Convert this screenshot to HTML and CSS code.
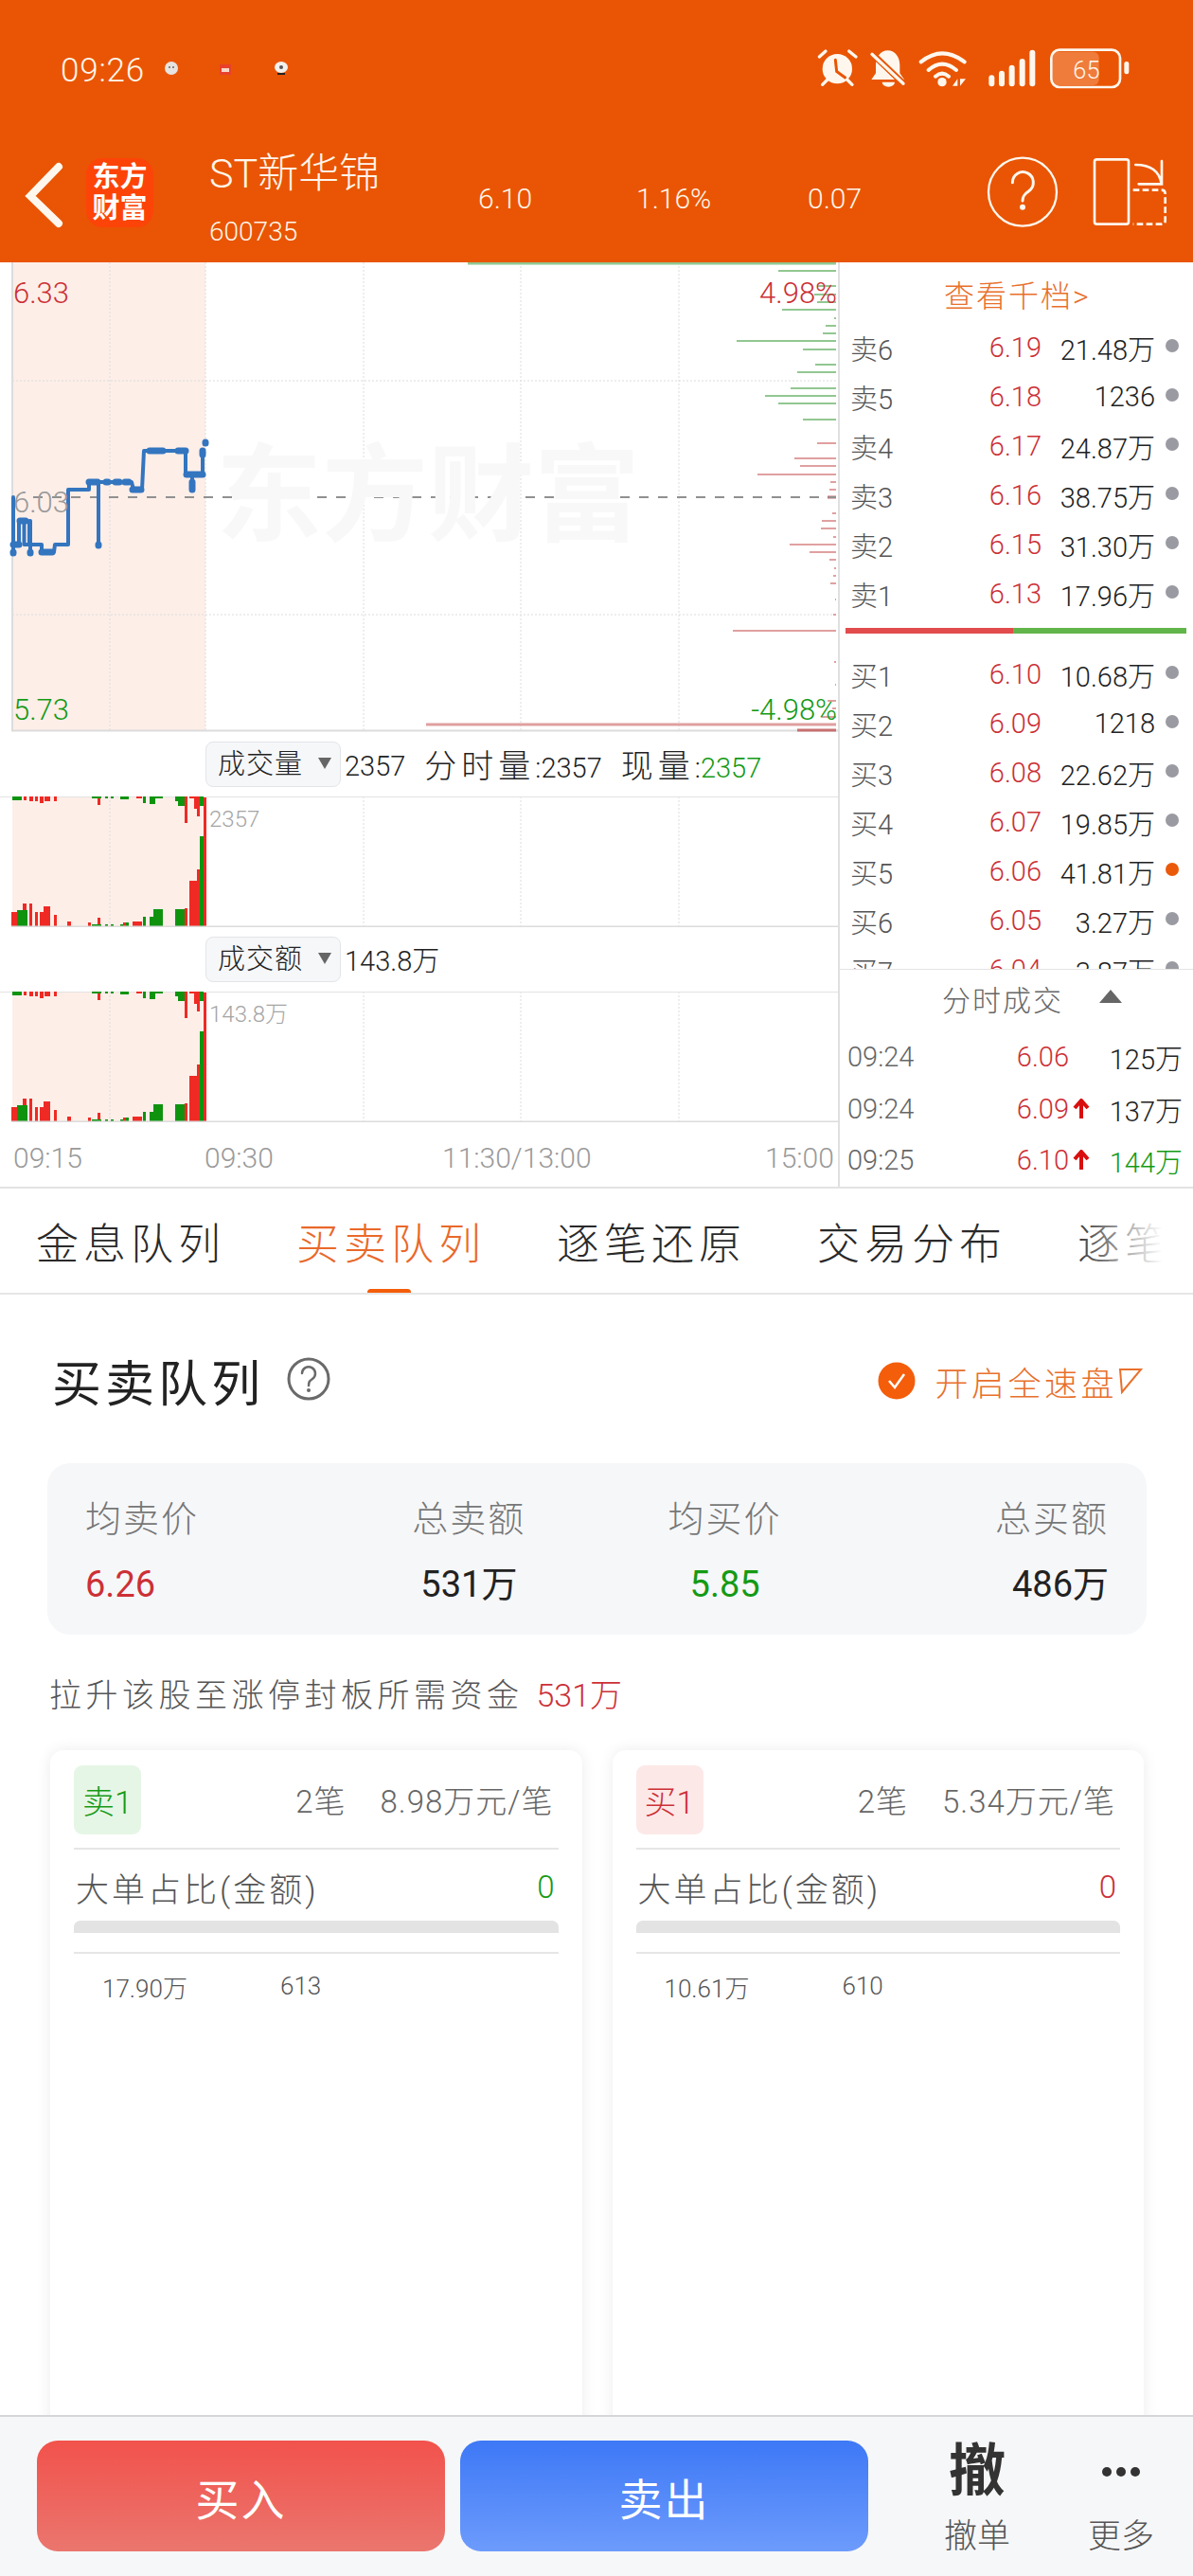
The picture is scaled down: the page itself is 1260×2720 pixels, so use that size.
FILE: index.html
```html
<!DOCTYPE html>
<html lang="zh-CN">
<head>
<meta charset="utf-8">
<title>ST新华锦</title>
<link rel="stylesheet" href="styles.css">
</head>
<body>
<div class="app">
  <header class="header">
    <div class="status">
      <span class="clock">09:26</span>
      <svg class="tiny" width="140" height="24" viewBox="0 0 140 24">
        <circle cx="12" cy="12" r="7" fill="#e6e3e0"/><circle cx="10" cy="11" r="1" fill="#666"/><circle cx="14" cy="11" r="1" fill="#666"/>
        <rect x="63" y="8" width="12" height="11" fill="#e8402a"/><rect x="65" y="12" width="8" height="4" fill="#f6d8c8"/>
        <ellipse cx="128" cy="11" rx="7" ry="6" fill="#f2efec"/><rect x="124" y="17" width="8" height="2" fill="#222"/><circle cx="128" cy="11" r="2" fill="#555"/>
      </svg>
      <svg class="status-icons" width="360" height="70" viewBox="0 0 1080 210">
        <circle cx="103" cy="98" r="47" fill="#fff7ee"/>
        <path d="M97 70L101 106L128 126" class="cut" stroke-width="9"/>
        <path d="M46 60L66 42M140 42L162 60M56 148L72 132M150 148L134 132" class="ink" stroke-width="10"/>
        <path d="M263 40c-24 0-38 22-38 46v26l-14 20h104l-14-20V86c0-24-14-46-38-46z" fill="#fff7ee"/>
        <path d="M245 140a20 15 0 0 0 40 0z" fill="#fff7ee"/>
        <path d="M205 42L320 152" class="cut" stroke-width="20"/>
        <path d="M213 52L312 145" class="ink" stroke-width="10"/>
        <path d="M368 76Q435 22 506 76M392 102Q435 64 480 102M414 122Q435 104 456 122" class="ink" stroke-width="12"/>
        <circle cx="435" cy="140" r="14" fill="#fff7ee"/>
        <path d="M468 152L484 130V152zM492 130L510 130L492 152z" fill="#fff7ee"/>
        <rect x="583" y="118" width="18" height="36" rx="9" fill="#fff7ee"/>
        <rect x="615" y="104" width="18" height="50" rx="9" fill="#fff7ee"/>
        <rect x="647" y="86" width="18" height="68" rx="9" fill="#fff7ee"/>
        <rect x="680" y="66" width="18" height="88" rx="9" fill="#fff7ee"/>
        <rect x="712" y="38" width="18" height="116" rx="9" fill="#fff7ee"/>
        <rect x="785" y="44" width="147" height="106" rx="18" fill="#ef7c3a"/>
        <rect x="781" y="38" width="218" height="118" rx="26" fill="none" stroke="#fff7ee" stroke-width="8"/>
        <rect x="1012" y="75" width="15" height="40" rx="7" fill="#fff7ee"/>
        <text x="850" y="130" class="batt">65</text>
      </svg>
    </div>
    <div class="nav">
      <svg class="back" width="50" height="74" viewBox="0 0 50 74"><path d="M37 6L7 37L37 66" class="ink" stroke-width="8"/></svg>
      <div class="logo"><span>东方</span><span>财富</span></div>
      <div class="stock">
        <div class="stock-name">ST新华锦</div>
        <div class="stock-code">600735</div>
      </div>
      <div class="quote"><span>6.10</span><span>1.16%</span><span>0.07</span></div>
      <svg class="nav-icons" width="220" height="110" viewBox="0 0 660 330">
        <circle cx="150" cy="158" r="108" fill="none" stroke="#fff7ee" stroke-width="7"/>
        <path d="M118 128a33 33 0 1 1 52 27c-15 10-20 17-20 31" class="ink" stroke-width="9"/>
        <circle cx="150" cy="206" r="9" fill="#fff7ee"/>
        <rect x="378" y="55" width="108" height="205" rx="7" fill="none" stroke="#fff7ee" stroke-width="8"/>
        <path d="M508 72q72 0 82 60M591 60V133H518" class="ink" stroke-width="8"/>
        <path d="M500 152H590q12 0 12 12V248q0 12-12 12H500" class="ink dash" stroke-width="8"/>
      </svg>
    </div>
  </header>

  <section class="market">
    <div class="charts">
      <div class="price-chart">
        <svg class="chart-svg" width="885" height="496" viewBox="0 0 885 496">
          <rect x="13" y="0" width="204" height="494" fill="#fdeee8"/>
          <path d="M116 0V494M217 0V494M384 0V494M550 0V494M717 0V494M13 125H884M13 372H884" class="grid"/>
          <path d="M13 0V495M12 494.5H885" class="axis"/>
          <path d="M822 9H883M863 25H883M860 34H883M863 42H883M826 50H883M881 59H883M872 67H883M869 75H883M778 83H883M848 92H883M861 108H883M842 116H883M835 133H883M808 141H883M822 149H883M848 166H883" class="depth-g"/>
          <path d="M494 1H883" class="depth-g thick"/>
          <path d="M863 191H883M839 207H883M845 215H883M800 224H883M877 232H883M876 240H883M879 265H883M868 273H883M867 281H883M880 290H883M834 298H883M855 306H883M876 314H883M881 323H883M880 331H883M877 339H883M882 356H883M880 372H883M774 389H883M881 422H883M882 446H883M874 463H883M879 471H883M868 480H883" class="depth-r"/>
          <path d="M450 488H883" class="depth-r thick"/>
          <path d="M874 248H883M842 494H883" class="depth-d"/>
          <path d="M35 248H883" class="mid"/>
          <path d="M14 248V306M14 298H20V273H25.5V298H31V273H32V306V298H44V306H57L58 298H72V240H94V232H104V298V232H139L141 240H150L152 199H196V224H203V232V224H214V199" class="line"/>
          <path d="M14 298h6M21 273h6M44 306h11M94 232h9M112 232h2M122 232h4M132 232h4M140 240h9M158 199h14M188 199h8M197 224h17M203 232v8M104 298v1M14 306v1M32 306v1M214 199v4M217 190v1" class="line fat"/>
        </svg>
        <span class="wm">东方财富</span>
        <span class="lab lab-tl red">6.33</span>
        <span class="lab lab-tr red">4.98%</span>
        <span class="lab lab-ml gray">6.03</span>
        <span class="lab lab-bl green">5.73</span>
        <span class="lab lab-br green">-4.98%</span>
      </div>

      <div class="sub">
        <div class="sub-head">
          <span class="pick">成交量<i class="caret"></i></span>
          <span class="sub-vals">2357</span>
          <span class="sub-vals gap"><span class="cjk">分时量</span>:2357</span>
          <span class="sub-vals gap"><span class="cjk">现量</span>:<em class="green">2357</em></span>
        </div>
        <div class="sub-plot">
          <svg class="chart-svg" width="885" height="138" viewBox="0 0 885 138">
            <g id="volume">
              <rect x="13" y="0" width="205" height="138" fill="#fdeee8"/>
              <path d="M116 0V138M384 0V138M550 0V138M717 0V138" class="grid"/>
              <path d="M0 0H885" class="hair"/>
              <path d="M12 138v-16h6v16zM24 138v-25h4v25zM31 138v-25h3v25zM37 138v-16h3v16zM42 138v-16h4v16zM46 138v-22h7v22zM57 138v-13h3v13zM71 138v-6h4v6zM93 138v-5h3v5zM103 138v-10h3v10zM130 138v-5h3v5zM140 138v-6h10v6zM195 138v-20h3v20zM200 138v-49h8v49zM208 138v-61h3v61zM215 138v-137h3v137zM25 0h3v4h-3zM31 0h4v5h-4zM37 0h3v5h-3zM42 0h4v7h-4zM47 0h6v5h-6zM57 0h3v5h-3zM103 0h3v9h-3zM144 0h6v2h-6zM195 0h3v28h-3zM200 0h5v2h-5zM205 0h3v13h-3zM208 0h3v21h-3z" fill="#ef2a24"/>
              <path d="M18 138v-18h6v18zM24 138v-18h5v18zM97 138v-3h10v3zM111 138v-3h3v3zM117 138v-3h3v3zM127 138v-3h3v3zM133 138v-5h3v5zM151 138v-11h3v11zM158 138v-11h4v11zM162 138v-19h10v19zM185 138v-19h3v19zM188 138v-19h7v19zM211 138v-96h4v96zM13 0h10v4h-10zM97 0h10v2h-10zM111 0h3v2h-3zM117 0h3v2h-3zM127 0h9v3h-9zM151 0h3v7h-3zM158 0h6v8h-6zM164 0h8v2h-8zM185 0h3v5h-3zM188 0h7v10h-7zM211 0h4v10h-4z" fill="#0f930f"/>
              <path d="M12 137.5H885" class="axis"/>
            </g>
          </svg>
          <span class="sub-tag">2357</span>
        </div>
      </div>

      <div class="sub">
        <div class="sub-head">
          <span class="pick">成交额<i class="caret"></i></span>
          <span class="sub-vals">143.8万</span>
        </div>
        <div class="sub-plot">
          <svg class="chart-svg" width="885" height="138" viewBox="0 0 885 138"><use href="#volume"/></svg>
          <span class="sub-tag">143.8万</span>
        </div>
      </div>

      <div class="axis-times"><span>09:15</span><span class="t2">09:30</span><span class="t3">11:30/13:00</span><span class="t4">15:00</span></div>
    </div>

    <aside class="side">
      <div class="book">
        <div class="book-link">查看千档&gt;</div>
        <div class="row"><span class="r-name">卖6</span><span class="r-price">6.19</span><span class="r-vol">21.48万</span><i class="dot"></i></div>
        <div class="row"><span class="r-name">卖5</span><span class="r-price">6.18</span><span class="r-vol">1236</span><i class="dot"></i></div>
        <div class="row"><span class="r-name">卖4</span><span class="r-price">6.17</span><span class="r-vol">24.87万</span><i class="dot"></i></div>
        <div class="row"><span class="r-name">卖3</span><span class="r-price">6.16</span><span class="r-vol">38.75万</span><i class="dot"></i></div>
        <div class="row"><span class="r-name">卖2</span><span class="r-price">6.15</span><span class="r-vol">31.30万</span><i class="dot"></i></div>
        <div class="row"><span class="r-name">卖1</span><span class="r-price">6.13</span><span class="r-vol">17.96万</span><i class="dot"></i></div>
        <div class="ratio"><i class="ratio-r"></i><i class="ratio-g"></i></div>
        <div class="row"><span class="r-name">买1</span><span class="r-price">6.10</span><span class="r-vol">10.68万</span><i class="dot"></i></div>
        <div class="row"><span class="r-name">买2</span><span class="r-price">6.09</span><span class="r-vol">1218</span><i class="dot"></i></div>
        <div class="row"><span class="r-name">买3</span><span class="r-price">6.08</span><span class="r-vol">22.62万</span><i class="dot"></i></div>
        <div class="row"><span class="r-name">买4</span><span class="r-price">6.07</span><span class="r-vol">19.85万</span><i class="dot"></i></div>
        <div class="row"><span class="r-name">买5</span><span class="r-price">6.06</span><span class="r-vol">41.81万</span><i class="dot on"></i></div>
        <div class="row"><span class="r-name">买6</span><span class="r-price">6.05</span><span class="r-vol">3.27万</span><i class="dot"></i></div>
        <div class="row"><span class="r-name">买7</span><span class="r-price">6.04</span><span class="r-vol">3.87万</span><i class="dot"></i></div>
      </div>
      <div class="trades">
        <div class="trades-head">分时成交<i class="tri"></i></div>
        <div class="trade"><span class="t-time">09:24</span><span class="t-price">6.06</span><span class="t-arrow"></span><span class="t-vol">125万</span></div>
        <div class="trade"><span class="t-time">09:24</span><span class="t-price">6.09</span><span class="t-arrow"><svg width="18" height="22" viewBox="0 0 18 22"><path d="M9 21V3M2 10L9 2L16 10" class="up"/></svg></span><span class="t-vol">137万</span></div>
        <div class="trade"><span class="t-time">09:25</span><span class="t-price">6.10</span><span class="t-arrow"><svg width="18" height="22" viewBox="0 0 18 22"><path d="M9 21V3M2 10L9 2L16 10" class="up"/></svg></span><span class="t-vol green">144万</span></div>
      </div>
    </aside>
  </section>

  <nav class="tabs">
    <span class="tab">金息队列</span>
    <span class="tab active">买卖队列</span>
    <span class="tab">逐笔还原</span>
    <span class="tab">交易分布</span>
    <span class="tab">逐笔委托</span>
    <i class="tabs-fade"></i>
  </nav>

  <main class="main">
    <div class="sec-head">
      <h1 class="sec-title">买卖队列</h1>
      <svg class="help" width="46" height="46" viewBox="0 0 46 46">
        <circle cx="23" cy="23" r="21" fill="none" stroke="#6a6a6a" stroke-width="3"/>
        <path d="M16 17a7 7 0 1 1 11 6c-3 2-4 3-4 7" fill="none" stroke="#6a6a6a" stroke-width="2.5" stroke-linecap="round"/>
        <circle cx="23" cy="35" r="2" fill="#6a6a6a"/>
      </svg>
      <div class="speed">
        <svg width="40" height="40" viewBox="0 0 40 40"><circle cx="20" cy="20" r="19.5" fill="#f45d0a"/><path d="M12 20L18 27L28 13" fill="none" stroke="#fff" stroke-width="2.5"/></svg>
        <span>开启全速盘</span>
        <svg width="28" height="36" viewBox="0 0 28 36"><path d="M3 6H25L5 30z" fill="none" stroke="#e8702c" stroke-width="2"/></svg>
      </div>
    </div>

    <div class="stats">
      <div class="stat s-left"><span class="stat-k">均卖价</span><span class="stat-v red">6.26</span></div>
      <div class="stat s-mid"><span class="stat-k">总卖额</span><span class="stat-v">531万</span></div>
      <div class="stat s-mid"><span class="stat-k">均买价</span><span class="stat-v green">5.85</span></div>
      <div class="stat s-right"><span class="stat-k">总买额</span><span class="stat-v">486万</span></div>
    </div>

    <p class="note">拉升该股至涨停封板所需资金<span class="red note-v">531万</span></p>

    <div class="queues">
      <article class="queue">
        <div class="q-top"><span class="badge badge-g">卖1</span><span class="q-info"><span>2笔</span><span>8.98万元/笔</span></span></div>
        <div class="q-big"><span class="q-big-k">大单占比(金额)</span><span class="green">0</span></div>
        <div class="q-bar"></div>
        <div class="q-row"><span class="q-amt">17.90万</span><span>613</span></div>
      </article>
      <article class="queue">
        <div class="q-top"><span class="badge badge-r">买1</span><span class="q-info"><span>2笔</span><span>5.34万元/笔</span></span></div>
        <div class="q-big"><span class="q-big-k">大单占比(金额)</span><span class="red">0</span></div>
        <div class="q-bar"></div>
        <div class="q-row"><span class="q-amt">10.61万</span><span>610</span></div>
      </article>
    </div>
  </main>

  <footer class="footer">
    <button class="btn btn-buy">买入</button>
    <button class="btn btn-sell">卖出</button>
    <div class="foot-item foot-a"><span class="foot-ico">撤</span><span class="foot-lab">撤单</span></div>
    <div class="foot-item foot-b"><span class="foot-ico dots"><i></i><i></i><i></i></span><span class="foot-lab">更多</span></div>
  </footer>
</div>
</body>
</html>
```

FILE: styles.css
```css
* { box-sizing: border-box; }
html, body { margin: 0; padding: 0; background: #fff; }
body { font-family: Roboto, "Noto Sans CJK SC", sans-serif; font-weight: 300; color: #222; }
i, em { font-style: normal; }
.app { width: 1260px; height: 2720px; display: flex; flex-direction: column; overflow: hidden; }
.red { color: #cc3036; }
.green { color: #159a15; }
.gray { color: #9a9a9a; }

.header { height: 277px; background: #e95504; color: #fff5ea; flex: none; }
.status { height: 110px; display: flex; align-items: flex-start; }
.clock { margin: 55px 0 0 64px; font-size: 35px; line-height: 40px; letter-spacing: 0.8px; }
.tiny { margin: 60px 0 0 16px; }
.status-icons { margin: 40px 50px 0 auto; }
.ink { fill: none; stroke: #fff7ee; stroke-linecap: round; }
.cut { fill: none; stroke: #e95504; stroke-linecap: round; }
.dash { stroke-linecap: butt; stroke-dasharray: 20 10; }
.batt { font-family: Roboto, sans-serif; font-weight: 300; font-size: 76px; fill: #fff7ee; }
.nav { height: 167px; display: flex; align-items: flex-start; position: relative; }
.back { margin: 60px 0 0 25px; }
.logo { width: 71px; height: 73px; margin: 57px 0 0 16px; background: #fc4408; border-radius: 17px; color: #fff; font-weight: 700; font-size: 29px; line-height: 33px; display: flex; flex-direction: column; align-items: center; justify-content: center; }
.stock { margin: 44px 0 0 59px; width: 284px; }
.stock-name { font-size: 43px; line-height: 58px; }
.stock-code { font-size: 28px; line-height: 34px; margin-top: 16px; }
.quote { margin-top: 80px; display: grid; grid-template-columns: 167px 181px 80px; font-size: 30px; line-height: 40px; }
.nav-icons { margin: 40px 10px 0 auto; }

.market { height: 976px; display: flex; flex: none; }
.charts { width: 885px; flex: none; display: flex; flex-direction: column; }
.price-chart { height: 496px; position: relative; }
.chart-svg { display: block; }
.grid { fill: none; stroke: #dcdcdc; stroke-width: 1; stroke-dasharray: 2 2; }
.axis { fill: none; stroke: #dcdcdc; stroke-width: 2; }
.hair { stroke: #e3e3e3; stroke-width: 2; fill: none; }
.depth-g { fill: none; stroke: #92c792; stroke-width: 2; }
.depth-r { fill: none; stroke: #e0a0a0; stroke-width: 2; }
.depth-d { fill: none; stroke: #c87070; stroke-width: 3; }
.thick { stroke-width: 3; }
.mid { fill: none; stroke: #909090; stroke-width: 2; stroke-dasharray: 10 10; }
.line { fill: none; stroke: #3375bf; stroke-width: 4; stroke-linecap: round; stroke-linejoin: round; }
.fat { stroke-width: 7; }
.wm { position: absolute; left: 228px; top: 183px; font-size: 112px; line-height: 130px; font-weight: 700; color: #f8f8f8; white-space: nowrap; }
.lab { position: absolute; font-size: 31px; line-height: 36px; }
.lab-tl { left: 14px; top: 15px; }
.lab-tr { right: 1px; top: 15px; }
.lab-ml { left: 14px; top: 236px; }
.lab-bl { left: 14px; top: 455px; }
.lab-br { right: 1px; top: 455px; }

.sub { height: 206px; }
.sub-head { height: 68px; padding: 10px 0 0 217px; display: flex; align-items: flex-start; font-size: 29px; line-height: 48px; }
.pick { width: 143px; height: 48px; background: #f6f7f9; border: 1px solid #e4e5e8; border-radius: 8px; padding-left: 12px; display: flex; align-items: center; font-size: 29px; letter-spacing: 1px; position: relative; margin-right: 4px; }
.caret { position: absolute; right: 9px; top: 16px; border: 7px solid transparent; border-top: 12px solid #666; border-bottom: 0; }
.sub-vals { white-space: nowrap; line-height: 52px; }
.sub-vals em { line-height: inherit; }
.cjk { font-size: 34px; letter-spacing: 5px; }
.gap { margin-left: 20px; }
.sub-plot { height: 138px; position: relative; }
.sub-tag { position: absolute; left: 221px; top: 9px; font-size: 24px; line-height: 30px; color: #a5a5a5; }

.axis-times { height: 67px; position: relative; font-size: 30px; line-height: 36px; color: #9a9a9a; padding: 20px 0 0 14px; border-bottom: 0; }
.axis-times span { position: absolute; top: 20px; }
.t2 { left: 216px; }
.t3 { left: 467px; }
.t4 { left: 808px; }

.side { width: 375px; flex: none; border-left: 2px solid #e0e0e0; display: flex; flex-direction: column; }
.book { height: 747px; overflow: hidden; flex: none; border-bottom: 1px solid #e3e3e3; }
.book-link { height: 64px; padding-left: 110px; color: #e8702c; font-size: 32px; line-height: 72px; letter-spacing: 2px; }
.row { height: 52px; display: flex; align-items: center; font-size: 29px; white-space: nowrap; }
.r-name { width: 90px; padding-left: 11px; color: #555; flex: none; }
.r-price { width: 123px; text-align: right; color: #cc3036; flex: none; }
.r-vol { width: 120px; text-align: right; color: #222; flex: none; }
.dot { width: 14px; height: 14px; border-radius: 50%; background: #9a9aa2; margin: -4px 0 0 11px; flex: none; }
.dot.on { background: #ea5a0a; }
.ratio { height: 6px; margin: 10px 7px 17px 6px; display: flex; }
.ratio-r { width: 177px; background: #e24c4c; }
.ratio-g { flex: 1; background: #62b54a; }
.trades { flex: 1; overflow: hidden; }
.trades-head { height: 65px; padding-left: 108px; color: #666; font-size: 30px; line-height: 66px; letter-spacing: 2px; position: relative; }
.tri { position: absolute; left: 274px; top: 21px; border: 12px solid transparent; border-bottom: 14px solid #666; border-top: 0; }
.trade { height: 54.5px; display: flex; align-items: center; font-size: 29px; white-space: nowrap; }
.t-time { width: 100px; padding-left: 8px; color: #666; flex: none; }
.t-price { width: 142px; text-align: right; color: #cc3036; flex: none; }
.t-arrow { width: 22px; height: 22px; margin-left: 4px; flex: none; display: flex; }
.t-vol { flex: 1; text-align: right; padding-right: 11px; }
.up { fill: none; stroke: #d90f0f; stroke-width: 4; }

.tabs { height: 114px; flex: none; display: flex; align-items: flex-start; gap: 75px; padding: 33px 0 0 38px; border-top: 2px solid #e3e3e3; border-bottom: 2px solid #e6e6e6; position: relative; overflow: hidden; white-space: nowrap; }
.tab { font-size: 45px; line-height: 54px; letter-spacing: 5px; color: #2a2a2a; flex: none; position: relative; }
.tab.active { color: #e9692a; }
.tab.active::after { content: ""; position: absolute; left: 75px; top: 73px; width: 46px; height: 7px; border-radius: 4px; background: #f45d0a; }
.tabs-fade { position: absolute; right: 0; top: 0; bottom: 0; width: 130px; background: linear-gradient(to right, rgba(255,255,255,0), #fff 75%); }

.main { flex: 1; min-height: 0; overflow: hidden; padding: 51px 49px 0 50px; }
.sec-head { height: 90px; display: flex; align-items: center; position: relative; }
.sec-title { margin: 0 0 0 5px; font-size: 52px; line-height: 60px; letter-spacing: 4px; font-weight: 400; color: #222; }
.help { margin: -14px 0 0 24px; }
.speed { margin: -10px 0 0 auto; display: flex; align-items: center; color: #e8702c; font-size: 35px; letter-spacing: 3.5px; padding-right: 3px; }
.speed span { margin-left: 20px; }
.stats { margin-top: 37px; height: 181px; background: #f6f7f9; border-radius: 24px; padding: 32px 40px 0; display: grid; grid-template-columns: repeat(4, 1fr); }
.stat { display: flex; flex-direction: column; }
.s-mid { align-items: center; }
.s-right { align-items: flex-end; }
.stat-k { font-size: 38px; line-height: 54px; color: #777; letter-spacing: 2px; }
.stat-v { font-size: 38px; line-height: 50px; margin-top: 17px; font-weight: 400; }
.note { margin: 44px 0 0 2px; height: 40px; font-size: 34px; line-height: 40px; letter-spacing: 4.5px; color: #555; white-space: nowrap; }
.note-v { margin-left: 14px; letter-spacing: 0; }
.queues { margin: 38px 3px 0; display: grid; grid-template-columns: 1fr 1fr; gap: 32px; }
.queue { height: 760px; background: #fff; border-radius: 14px; box-shadow: 0 0 16px rgba(0,0,0,0.08); padding: 16px 25px 0; }
.q-top { height: 89px; display: flex; align-items: flex-start; justify-content: space-between; border-bottom: 2px solid #e6e6e6; }
.badge { width: 71px; height: 73px; border-radius: 9px; font-size: 34px; display: flex; align-items: center; justify-content: center; }
.badge-g { background: #e6f6e6; color: #169a16; }
.badge-r { background: #fde8e8; color: #cc3036; }
.q-info { display: flex; gap: 36px; font-size: 33px; letter-spacing: 1px; line-height: 78px; color: #666; padding-right: 5px; }
.q-big { height: 75px; display: flex; justify-content: space-between; align-items: center; font-size: 33px; color: #555; padding: 4px 4px 0 2px; }
.q-big-k { font-size: 35px; letter-spacing: 3px; }
.q-bar { height: 13px; background: #e3e3e3; border-radius: 7px 7px 0 0 / 7px 7px 0 0; }
.q-row { margin-top: 20px; border-top: 2px solid #e6e6e6; height: 70px; display: flex; align-items: center; padding-left: 30px; font-size: 26px; color: #555; }
.q-amt { width: 188px; }

.footer { height: 170px; flex: none; background: #f6f7f9; border-top: 2px solid #d4d6da; display: flex; align-items: flex-start; padding: 25px 0 0 39px; position: relative; }
.btn { width: 431px; height: 117px; border: 0; border-radius: 22px; color: #fff; font-family: inherit; font-size: 46px; font-weight: 400; letter-spacing: 2px; padding: 0; }
.btn-buy { background: linear-gradient(#f2524c, #ea766e); }
.btn-sell { margin-left: 16px; background: linear-gradient(#3d78f6, #6d9bfc); }
.foot-item { display: flex; flex-direction: column; align-items: center; color: #555; width: 90px; }
.foot-a { margin-left: 70px; }
.foot-b { margin-left: 62px; }
.foot-ico { height: 66px; font-size: 60px; line-height: 60px; font-weight: 700; color: #333; display: flex; align-items: center; gap: 5px; }
.dots i { width: 10px; height: 10px; border-radius: 50%; background: #333; }
.foot-lab { font-size: 35px; line-height: 44px; margin-top: 14px; }
```
